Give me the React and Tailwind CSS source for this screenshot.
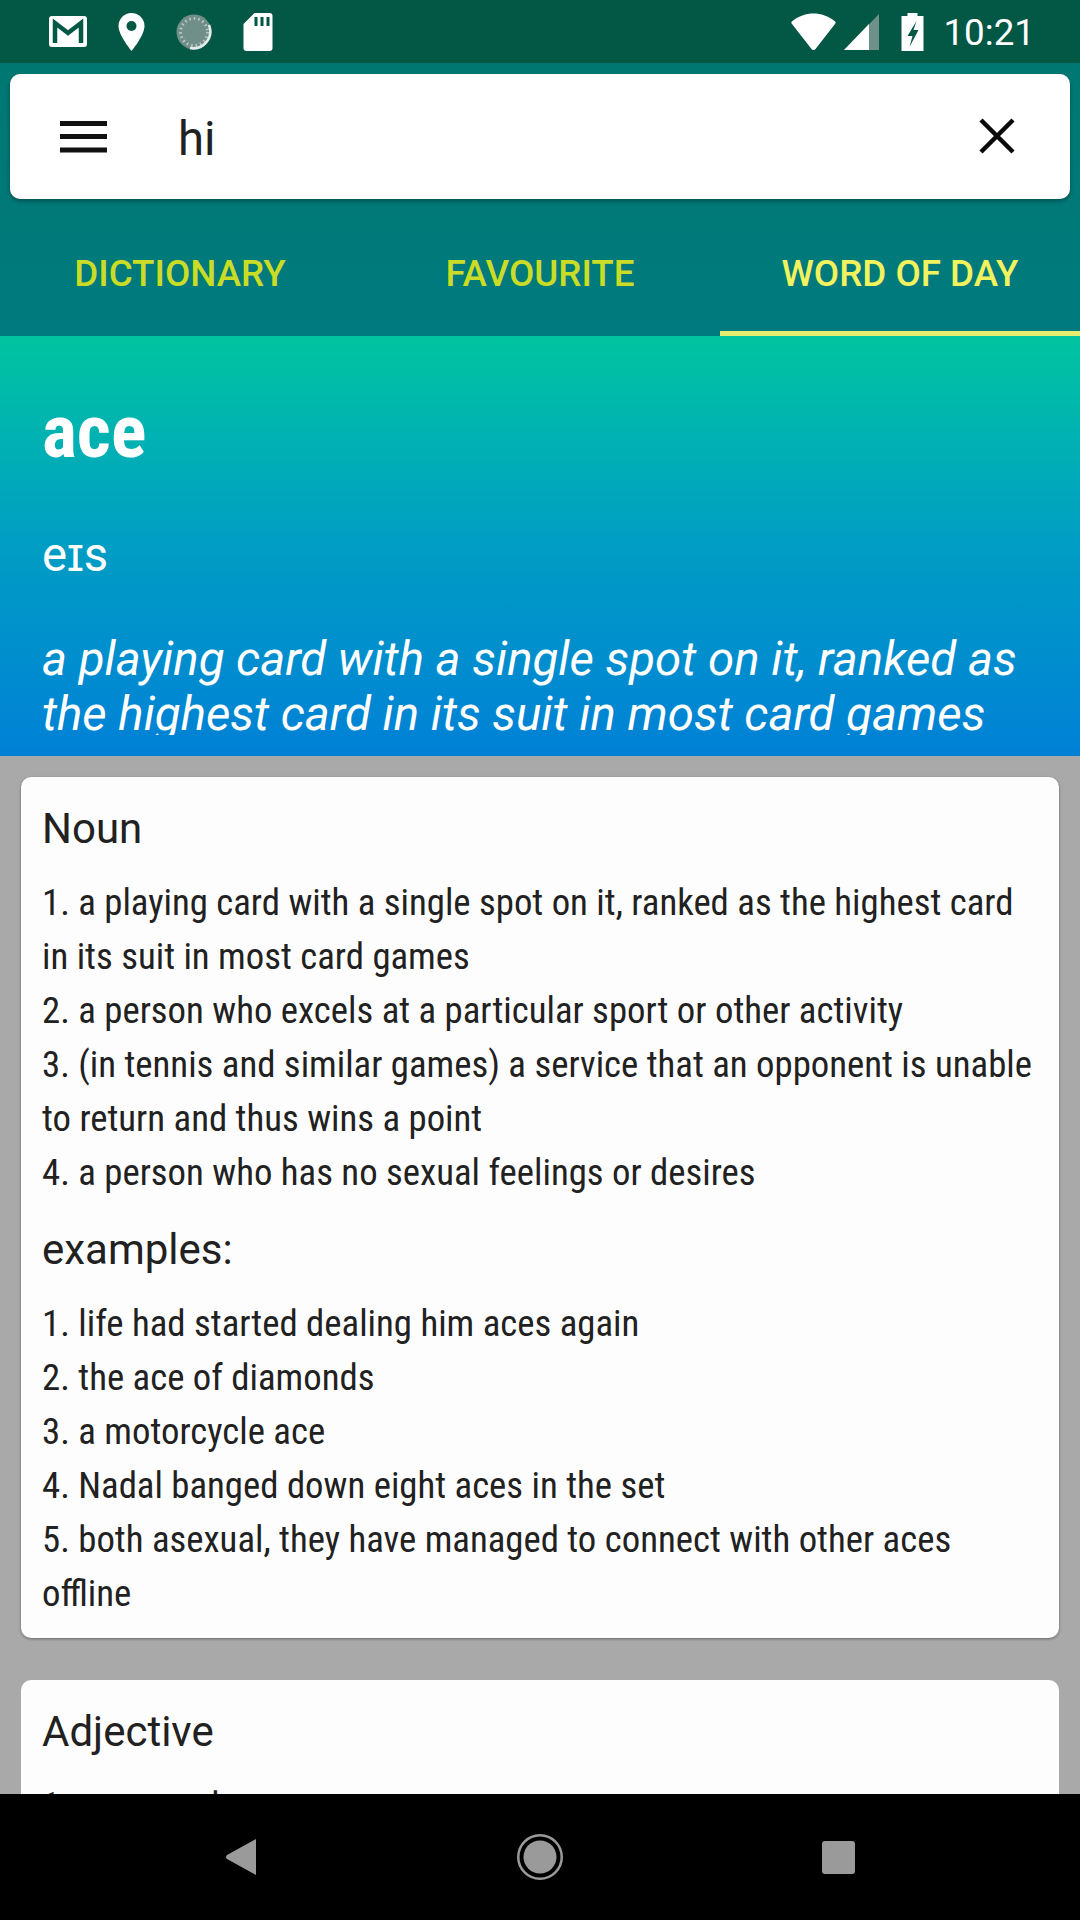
const noun = [
  '1. a playing card with a single spot on it, ranked as the highest card in its suit in most card games',
  '2. a person who excels at a particular sport or other activity',
  '3. (in tennis and similar games) a service that an opponent is unable to return and thus wins a point',
  '4. a person who has no sexual feelings or desires',
];

const examples = [
  '1. life had started dealing him aces again',
  '2. the ace of diamonds',
  '3. a motorcycle ace',
  '4. Nadal banged down eight aces in the set',
  '5. both asexual, they have managed to connect with other aces offline',
];

const condensed = 'font-["Roboto",sans-serif] [font-stretch:75%]';
const heading = "font-['Roboto',sans-serif] text-[42px] leading-[52px] text-[#212121]";

function StatusBar() {
  return (
    <div className="flex h-[63px] items-center justify-between bg-[#035745] pl-[49px] pr-[45px] text-white">
      <div className="flex items-center gap-[31px]">
        <svg width="38" height="31" viewBox="0 0 38 31">
          <rect x="0" y="0" width="38" height="31" rx="3" fill="#fff" />
          <path d="M6 27V7l13 10L32 7v20" fill="none" stroke="#035745" strokeWidth="4.500" />
        </svg>
        <svg width="27" height="38" viewBox="0 0 26 38">
          <path d="M13 0C5.800 0 0 5.800 0 13c0 9.500 13 25 13 25s13-15.500 13-25C26 5.800 20.200 0 13 0z" fill="#fff" />
          <circle cx="13" cy="13" r="5" fill="#035745" />
        </svg>
        <svg width="36" height="38" viewBox="0 0 36 38">
          <circle cx="18" cy="19" r="17.500" fill="#6f8f88" />
          <circle cx="18" cy="19" r="13.500" fill="none" stroke="#b9cac6" strokeWidth="3" strokeDasharray="1.500 3" />
          <path d="M33 12a17 17 0 0 1-19 23" fill="none" stroke="#e4ece9" strokeWidth="2.500" />
        </svg>
        <svg width="30" height="38" viewBox="0 0 29 38">
          <path d="M11 0h15a3 3 0 0 1 3 3v32a3 3 0 0 1-3 3H3a3 3 0 0 1-3-3V11z" fill="#fff" />
          <path d="M11 4h3v9h-3zM17 4h3v9h-3zM23 4h3v9h-3z" fill="#035745" />
        </svg>
      </div>
      <div className="flex items-center">
        <svg width="45" height="38" viewBox="0 0 44 38" className="mr-[8px]">
          <path d="M1 8a2 2 0 0 0-.500 3L20 36a2.500 2.500 0 0 0 4 0l19.500-25a2 2 0 0 0-.500-3C31-2 13-2 1 8z" fill="#fff" />
        </svg>
        <svg width="35" height="36" viewBox="0 0 35 36" className="mr-[22px] mt-[1px]">
          <path d="M0 36L35 0v36z" fill="#6f9089" />
          <path d="M0 36L25 10v26z" fill="#fff" />
        </svg>
        <svg width="23" height="38" viewBox="0 0 22 38" className="mr-[19px]">
          <path d="M6 0h10v3h6v35H0V3h6z" fill="#fff" />
          <path d="M15 8l-9 15h5l-3 11 9-17h-5z" fill="#035745" />
        </svg>
        <span className="pt-[3px] font-['Roboto',sans-serif] text-[36.750px] leading-none">10:21</span>
      </div>
    </div>
  );
}

function SearchBar() {
  return (
    <div className="mx-[10px] flex h-[125px] items-center rounded-[10px] bg-white pl-[50px] pr-[55px] shadow-[0_2px_4px_rgba(0,0,0,0.35)]">
      <svg width="47" height="32" viewBox="0 0 47 32">
        <path d="M0 0h47v5H0zM0 13h47v5H0zM0 26.500h47v5H0z" fill="#111" />
      </svg>
      <span className="ml-[71px] flex-1 pt-[6px] font-['Roboto',sans-serif] text-[47.250px] text-[#212121]">hi</span>
      <svg width="36" height="36" viewBox="0 0 36 36" className="mt-[-2px]">
        <path d="M2 2l32 32M34 2L2 34" stroke="#0a0a0a" strokeWidth="4.500" />
      </svg>
    </div>
  );
}

function Tabs() {
  return (
    <div className="grid h-[137px] grid-cols-3 font-['Roboto',sans-serif] text-[36.750px] font-medium">
      <div className="flex items-center justify-center pt-[12px] text-[#cbdc26]">DICTIONARY</div>
      <div className="flex items-center justify-center pt-[12px] text-[#cbdc26]">FAVOURITE</div>
      <div className="flex items-center justify-center border-b-[5px] border-[#e6ec6f] pt-[17px] text-[#f2f25e]">
        WORD OF DAY
      </div>
    </div>
  );
}

function Hero() {
  return (
    <div className="h-[420px] bg-gradient-to-b from-[#00c49f] via-[#009dc4] via-50% to-[#0080d6] pl-[42px] pr-[40px] pt-[58px] text-white">
      <div className={`${condensed} text-[74px] font-bold leading-[76px]`}>ace</div>
      <div className="mt-[60px] font-['Roboto',sans-serif] text-[47.250px] leading-[50px]">eɪs</div>
      <div className="mt-[52px] h-[103px] overflow-hidden font-['Roboto',sans-serif] text-[47.400px] italic leading-[55px]">
        a playing card with a single spot on it, ranked as the highest card in its suit in most card games
      </div>
    </div>
  );
}

function List({ items }) {
  return (
    <div className={`${condensed} mt-[21px] text-[36.750px] leading-[54px] text-[#212121]`}>
      {items.map(t => (
        <div key={t}>{t}</div>
      ))}
    </div>
  );
}

export default function App() {
  return (
    <div className="flex h-[1920px] w-[1080px] flex-col overflow-hidden bg-black">
      <div className="bg-gradient-to-b from-[#00786f] to-[#007a7e]">
        <StatusBar />
        <div className="pt-[11px]">
          <SearchBar />
          <Tabs />
        </div>
      </div>
      <Hero />
      <div className="h-[1038px] overflow-hidden bg-[#a9a9a9] px-[21px] pt-[21px]">
        <div className="rounded-[10px] bg-[#fdfdfd] pb-[17px] pl-[21px] pr-[22px] pt-[26px] shadow-[0_1px_3px_rgba(0,0,0,0.4)]">
          <div className={heading}>Noun</div>
          <List items={noun} />
          <div className={`${heading} mt-[24px]`}>examples:</div>
          <List items={examples} />
        </div>
        <div className="mt-[42px] rounded-[10px] bg-[#fdfdfd] pb-[18px] pl-[21px] pr-[22px] pt-[26px]">
          <div className={heading}>Adjective</div>
          <List items={['1. very good']} />
        </div>
      </div>
      <div className="flex h-[126px] items-center justify-center bg-black">
        <svg width="30" height="36" viewBox="0 0 30 36" className="mr-[261px]">
          <path d="M30 0v36L1 20a2.500 2.500 0 0 1 0-4z" fill="#9a9a9a" />
        </svg>
        <svg width="46" height="46" viewBox="0 0 46 46" className="mr-[259px]">
          <circle cx="23" cy="23" r="21.750" fill="none" stroke="#9a9a9a" strokeWidth="2.500" />
          <circle cx="23" cy="23" r="16.500" fill="#9a9a9a" />
        </svg>
        <svg width="33" height="33" viewBox="0 0 33 33">
          <rect width="33" height="33" rx="3" fill="#9a9a9a" />
        </svg>
      </div>
    </div>
  );
}
